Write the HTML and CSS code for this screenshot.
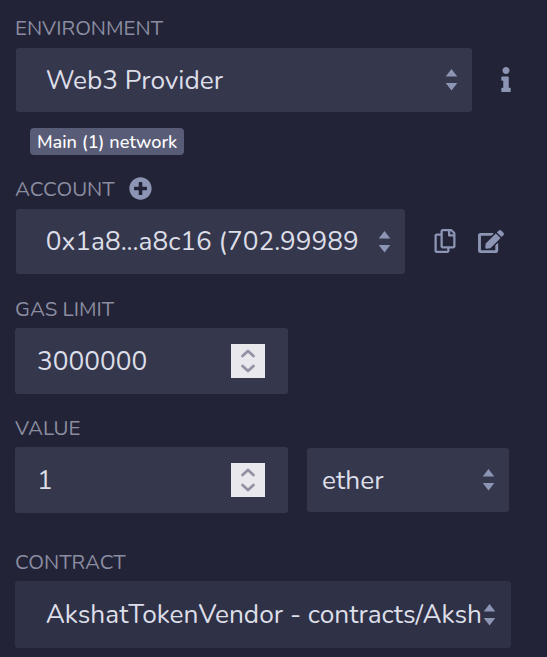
FILE: index.html
```html
<!DOCTYPE html>
<html lang="en">
<head>
<meta charset="utf-8">
<title>Deploy settings</title>
<link rel="stylesheet" href="styles.css">
</head>
<body>
<main class="panel">
  <section class="group environment">
    <div class="label"><span>ENVIRONMENT</span></div>
    <div class="row">
      <div class="select"><span class="text">Web3 Provider</span><svg class="carets" viewBox="0 0 12 22"><path d="M5.500 0L11.300 7.500H-.3zM-.3 14H11.300L5.500 21.500z"/></svg></div>
      <svg class="info" viewBox="0 0 192 512"><path d="M20 424.229h20V279.771H20c-11.046 0-20-8.954-20-20V212c0-11.046 8.954-20 20-20h112c11.046 0 20 8.954 20 20v212.229h20c11.046 0 20 8.954 20 20V492c0 11.046-8.954 20-20 20H20c-11.046 0-20-8.954-20-20v-47.771c0-11.046 8.954-20 20-20zM96 0C56.235 0 24 32.235 24 72s32.235 72 72 72 72-32.235 72-72S135.764 0 96 0z"/></svg>
    </div>
    <div class="badge">Main (1) network</div>
  </section>
  <section class="group account">
    <div class="label"><span>ACCOUNT</span><svg class="plus" viewBox="0 0 512 512"><path d="M256 8C119 8 8 119 8 256s111 248 248 248 248-111 248-248S393 8 256 8zm144 276c0 6.600-5.400 12-12 12h-92v92c0 6.600-5.400 12-12 12h-56c-6.600 0-12-5.400-12-12v-92h-92c-6.600 0-12-5.400-12-12v-56c0-6.600 5.400-12 12-12h92v-92c0-6.600 5.400-12 12-12h56c6.600 0 12 5.400 12 12v92h92c6.600 0 12 5.400 12 12v56z"/></svg></div>
    <div class="row">
      <div class="select"><span class="text">0x1a8...a8c16 (702.99989</span><svg class="carets" viewBox="0 0 12 22"><path d="M5.500 0L11.300 7.500H-.3zM-.3 14H11.300L5.500 21.500z"/></svg></div>
      <svg class="copy" viewBox="0 0 448 512"><path d="M433.941 65.941l-51.882-51.882A48 48 0 0 0 348.118 0H176c-26.510 0-48 21.490-48 48v48H48c-26.510 0-48 21.490-48 48v320c0 26.510 21.490 48 48 48h224c26.510 0 48-21.490 48-48v-48h80c26.510 0 48-21.490 48-48V99.882a48 48 0 0 0-14.059-33.941zM266 464H54a6 6 0 0 1-6-6V150a6 6 0 0 1 6-6h74v224c0 26.510 21.490 48 48 48h96v42a6 6 0 0 1-6 6zm128-96H182a6 6 0 0 1-6-6V54a6 6 0 0 1 6-6h106v88c0 13.255 10.745 24 24 24h88v202a6 6 0 0 1-6 6zm6-256h-64V48h9.632c1.591 0 3.117.632 4.243 1.757l48.368 48.368a6 6 0 0 1 1.757 4.243V112z"/></svg>
      <svg class="edit" viewBox="0 0 576 512"><path d="M402.600 83.200l90.200 90.200c3.800 3.800 3.800 10 0 13.800L274.400 405.600l-92.800 10.300c-12.400 1.400-22.900-9.100-21.500-21.500l10.300-92.800L388.800 83.200c3.800-3.800 10-3.800 13.800 0zm162-22.900l-48.800-48.800c-15.200-15.200-39.900-15.200-55.200 0l-35.400 35.400c-3.800 3.800-3.800 10 0 13.800l90.200 90.200c3.800 3.800 10 3.800 13.800 0l35.400-35.400c15.200-15.300 15.200-40 0-55.200zM384 346.200V448H64V128h229.800c3.200 0 6.200-1.300 8.500-3.500l40-40c7.600-7.600 2.200-20.500-8.500-20.500H48C21.500 64 0 85.500 0 112v352c0 26.500 21.500 48 48 48h352c26.500 0 48-21.500 48-48V306.200c0-10.700-12.900-16-20.500-8.500l-40 40c-2.200 2.300-3.500 5.300-3.500 8.500z"/></svg>
    </div>
  </section>
  <section class="group gas">
    <div class="label"><span>GAS LIMIT</span></div>
    <div class="number"><span class="text">3000000</span><svg class="spinner" viewBox="0 0 34 34"><path d="M11.500 12L17 7L22.500 12M11.500 22L17 27L22.500 22"/></svg></div>
  </section>
  <section class="group value">
    <div class="label"><span>VALUE</span></div>
    <div class="row">
      <div class="number"><span class="text">1</span><svg class="spinner" viewBox="0 0 34 34"><path d="M11.500 12L17 7L22.500 12M11.500 22L17 27L22.500 22"/></svg></div>
      <div class="select unit"><span class="text">ether</span><svg class="carets" viewBox="0 0 12 22"><path d="M5.500 0L11.300 7.500H-.3zM-.3 14H11.300L5.500 21.500z"/></svg></div>
    </div>
  </section>
  <section class="group contract">
    <div class="label"><span>CONTRACT</span></div>
    <div class="select"><span class="text">AkshatTokenVendor - contracts/Aksh</span><svg class="carets" viewBox="0 0 12 22"><path d="M5.500 0L11.300 7.500H-.3zM-.3 14H11.300L5.500 21.500z"/></svg></div>
  </section>
</main>
</body>
</html>
```
FILE: styles.css
```css
* { box-sizing: border-box; }
body {
  margin: 0;
  background: #222336;
  color: #dcdee8;
  font-family: Nunito, "Open Sans", sans-serif;
  font-weight: 400;
}
.panel { height: 657px; padding: 15px 0 0 15px; overflow: hidden; }
.group { display: flex; flex-direction: column; align-items: flex-start; }
.row { display: flex; align-items: center; }
.label {
  display: flex;
  align-items: center;
  height: 28px;
  color: #8b8da1;
  font-size: 20.5px;
  line-height: 28px;
  white-space: nowrap;
}
.label span { padding-bottom: 2px; }
.select, .number {
  display: flex;
  align-items: center;
  justify-content: space-between;
  background: #35374c;
  border-radius: 3px;
  font-size: 26.25px;
  line-height: 36px;
  white-space: nowrap;
}
.text { padding-bottom: 1px; }
.select { padding: 0 14px 0 29.7px; }
.number { width: 273px; height: 66px; padding: 0 23px 0 22px; }
svg { flex: none; fill: #8c95b4; }
.carets { width: 12px; height: 22px; overflow: visible; }
.spinner { width: 34px; height: 34px; background: #e9e8ed; }
.spinner path { fill: none; stroke: #9391a3; stroke-width: 2.800; stroke-linecap: round; stroke-linejoin: round; }

.environment { height: 161px; }
.environment .label { margin-bottom: 5px; }
.environment .select { width: 456px; height: 64px; margin-left: 1px; }
.info { width: 10px; height: 25px; margin: -2px 0 0 29px; }
.badge {
  width: 154px;
  height: 27px;
  margin: 16px 0 0 15px;
  padding: 1px 0 0 7px;
  border-radius: 4px;
  background: #595c76;
  color: #fff;
  font-size: 18.2px;
  font-weight: 500;
  line-height: 27px;
  white-space: nowrap;
}
.account { height: 120px; }
.account .label { margin-bottom: 5px; }
.plus { width: 23px; height: 23px; margin: -4px 0 0 14.5px; }
.account .select { width: 389px; height: 65px; margin-left: 1px; }
.copy { width: 22px; height: 24px; margin: -2px 0 0 29px; }
.edit { width: 26px; height: 23px; margin: -1px 0 0 22px; }
.gas { height: 119px; }
.gas .label, .value .label, .contract .label { margin-bottom: 4px; }
.value { height: 134px; }
.unit { width: 202px; height: 64px; margin-left: 19px; padding-left: 15px; }
.contract .select { width: 496px; height: 67px; padding-left: 30.7px; padding-right: 15px; background: #2f3146; }
```
